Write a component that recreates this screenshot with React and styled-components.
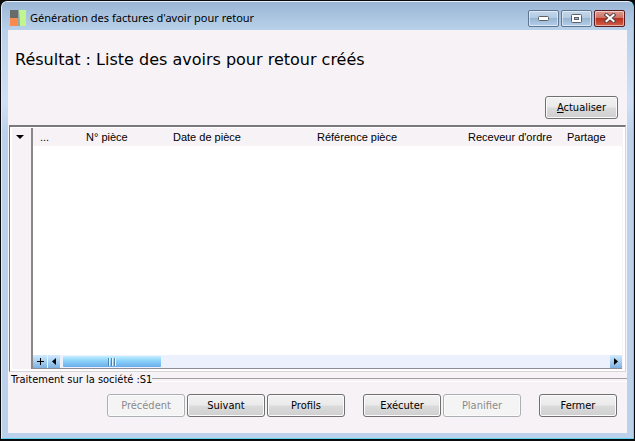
import React from 'react';
import styled, { createGlobalStyle } from 'styled-components';

const GlobalStyle = createGlobalStyle`
  * {
    box-sizing: border-box;
  }

  body {
    margin: 0;
    background: #000;
    color: #000;
    font-family: 'DejaVu Sans Condensed', 'DejaVu Sans', sans-serif;
    font-size: 11px;
  }
`;

const Desktop = styled.div`
  display: flex;
  min-height: 100vh;
  padding: 1px 1px 2px;
  background: #0a0a0c;
`;

const Window = styled.div`
  flex: 1;
  display: flex;
  flex-direction: column;
  padding: 0 6px 5px;
  border: 1px solid #5fd3f0;
  border-top-color: #e6f0fa;
  border-left-color: #e3edf8;
  border-radius: 6px 6px 0 0;
  background: linear-gradient(#9ab6d5 0, #b9d1ea 28px, #cfe0f5 100px, #bcd2ec 130px, #bcd2ec 100%);
`;

const TitleBar = styled.header`
  display: flex;
  align-items: center;
  gap: 4px;
  height: 28px;
  padding: 4px 2px 0;
`;

const Title = styled.h1`
  flex: 1;
  margin: 0;
  font-family: 'Noto Sans', sans-serif;
  font-size: 11px;
  font-weight: 400;
  line-height: 16px;
`;

const WindowControls = styled.div`
  display: flex;
  gap: 2px;
`;

const ControlButton = styled.button`
  display: flex;
  align-items: center;
  justify-content: center;
  width: 31px;
  height: 17px;
  padding: 0;
  border: 1px solid ${(props) => (props.$close ? '#5c1d22' : '#5f7690')};
  border-radius: 2px;
  box-shadow: inset 0 0 0 1px rgba(255, 255, 255, 0.5);
  background: ${(props) =>
    props.$close
      ? 'linear-gradient(#dd9c90 0, #cd7264 45%, #b8301e 50%, #d0604a 100%)'
      : 'linear-gradient(#c5d8ec 0, #b3cae3 45%, #98b5d3 50%, #b5cfe9 100%)'};
`;

const Content = styled.main`
  flex: 1;
  display: flex;
  flex-direction: column;
  background: #f6f2f6;
`;

const Heading = styled.h2`
  margin: 0;
  padding: 18px 7px 0;
  font-family: 'DejaVu Sans', Verdana, sans-serif;
  font-size: 16px;
  font-weight: 400;
  line-height: 24px;
`;

const Toolbar = styled.div`
  display: flex;
  justify-content: flex-end;
  padding: 24px 9px 6px;
`;

const Button = styled.button`
  width: ${(props) => (props.$narrow ? '73px' : '78px')};
  height: 23px;
  padding: 0;
  border: 1px solid #707070;
  border-radius: 3px;
  box-shadow: inset 0 0 0 1px #fbfbfb;
  background: linear-gradient(#f3f2f3 0, #ebeaeb 48%, #dcdbdc 52%, #d0cfd0 100%);
  color: #000;
  font: inherit;
  line-height: 16px;

  &:disabled {
    border-color: #adb0b2;
    background: #f5f4f5;
    color: #8b8a8c;
  }
`;

const ListPanel = styled.section`
  flex: 1;
  display: flex;
  margin: 0 1px;
  padding: 1px 2px 2px 1px;
  border: 1px solid #d8d5d8;
  border-top: 2px solid #7b797c;
  border-left: 1px solid #77757a;
  background: #fff;
`;

const Gutter = styled.div`
  width: 22px;
  padding-top: 7px;
  border-right: 2px solid #8a878b;
  border-left: 1px solid #fff;
  background: #f6f2f6;
`;

const MenuButton = styled.button`
  display: block;
  padding: 0 0 0 4px;
  border: 0;
  background: none;
  line-height: 0;
`;

const ListArea = styled.div`
  flex: 1;
  display: flex;
  flex-direction: column;
  justify-content: space-between;
  min-width: 0;
  border-right: 1px solid #f6f2f6;
`;

const Table = styled.table`
  width: 100%;
  border-collapse: collapse;
  table-layout: fixed;
  font-family: 'Liberation Sans', Arial, sans-serif;
  font-size: 11px;
`;

const ColumnHeader = styled.th`
  width: ${(props) => props.$width || 'auto'};
  height: 18px;
  padding: 0 0 0 7px;
  background: #f6f2f6;
  font-weight: 400;
  text-align: left;
  white-space: nowrap;
`;

const ScrollBar = styled.div`
  display: flex;
  gap: 1px;
  height: 14px;
  border-bottom: 1px solid #8f8e98;
  background: #edf1fd;
`;

const ScrollButton = styled.button`
  display: flex;
  align-items: center;
  justify-content: center;
  width: ${(props) => (props.$wide ? '14px' : '12px')};
  height: 13px;
  padding: 0;
  border: 0;
  background: linear-gradient(#d3ebfc 0, #a5cff3 50%, #7fb2e0 100%);
`;

const Track = styled.div`
  flex: 1;
  padding: 1px 0 0 2px;
`;

const Thumb = styled.div`
  display: flex;
  align-items: center;
  justify-content: center;
  width: 98px;
  height: 11px;
  border-radius: 1px;
  background: linear-gradient(#c4f0ff 0, #8fd4fb 40%, #6aaeea 100%);
`;

const Status = styled.div`
  display: flex;
  align-items: center;
  height: 16px;
  padding-left: 3px;
  line-height: 16px;

  &::after {
    content: '';
    flex: 1;
    height: 2px;
    border-top: 1px solid #a3a0a4;
    border-bottom: 1px solid #fff;
  }
`;

const Footer = styled.footer`
  display: flex;
  justify-content: flex-end;
  gap: 18px;
  padding: 6px 10px 16px;
`;

const ButtonGroup = styled.div`
  display: flex;
  gap: 2px;
`;

const columns = [
  { label: '...', width: '46px' },
  { label: 'N° pièce', width: '87px' },
  { label: 'Date de pièce', width: '144px' },
  { label: 'Référence pièce', width: '151px' },
  { label: "Receveur d'ordre", width: '99px' },
  { label: 'Partage' },
];

const AppIcon = () => (
  <svg width="16" height="16" viewBox="0 0 16 16" aria-hidden="true">
    <rect width="8" height="8" fill="#686c69" />
    <rect y="8" width="8" height="8" fill="#fa8a50" />
    <path d="M9 0h7v16h-6z" fill="#c0f590" />
    <path d="M8 0h1l1 16H8z" fill="#8fa8a4" />
  </svg>
);

const App = () => (
  <>
    <GlobalStyle />
    <Desktop>
      <Window>
        <TitleBar>
          <AppIcon />
          <Title>Génération des factures d'avoir pour retour</Title>
          <WindowControls>
            <ControlButton aria-label="Réduire">
              <svg width="11" height="5" viewBox="0 0 11 5">
                <rect x="0.5" y="0.5" width="10" height="4" rx="1" fill="#fff" stroke="#5a5f68" />
              </svg>
            </ControlButton>
            <ControlButton aria-label="Agrandir">
              <svg width="11" height="9" viewBox="0 0 11 9">
                <rect x="0.5" y="0.5" width="10" height="8" rx="1" fill="#fff" stroke="#5a5f68" />
                <rect x="3.5" y="3.5" width="4" height="2" fill="#9bb8d6" stroke="#5a5f68" />
              </svg>
            </ControlButton>
            <ControlButton $close aria-label="Fermer la fenêtre">
              <svg width="12" height="10" viewBox="0 0 12 10">
                <path d="M2.5 2l7 6M9.5 2l-7 6" stroke="#5b4348" strokeWidth="4" strokeLinecap="square" />
                <path d="M2.5 2l7 6M9.5 2l-7 6" stroke="#fff" strokeWidth="2" strokeLinecap="square" />
              </svg>
            </ControlButton>
          </WindowControls>
        </TitleBar>

        <Content>
          <Heading>Résultat : Liste des avoirs pour retour créés</Heading>
          <Toolbar>
            <Button $narrow>
              <u>A</u>ctualiser
            </Button>
          </Toolbar>

          <ListPanel>
            <Gutter>
              <MenuButton aria-label="Menu de la liste">
                <svg width="8" height="4" viewBox="0 0 8 4">
                  <path d="M0 0h8L4 4z" />
                </svg>
              </MenuButton>
            </Gutter>
            <ListArea>
              <Table>
                <thead>
                  <tr>
                    {columns.map((column) => (
                      <ColumnHeader key={column.label} $width={column.width}>
                        {column.label}
                      </ColumnHeader>
                    ))}
                  </tr>
                </thead>
              </Table>
              <ScrollBar>
                <ScrollButton $wide aria-label="Ajouter">
                  <svg width="7" height="7" viewBox="0 0 7 7">
                    <path d="M3 0h1v3h3v1H4v3H3V4H0V3h3z" />
                  </svg>
                </ScrollButton>
                <ScrollButton aria-label="Défiler à gauche">
                  <svg width="4" height="7" viewBox="0 0 4 7">
                    <path d="M4 0v7L0 3.5z" />
                  </svg>
                </ScrollButton>
                <Track>
                  <Thumb>
                    <svg width="8" height="8" viewBox="0 0 8 8">
                      <path d="M0 0h1v8H0zM3 0h1v8H3zM6 0h1v8H6z" fill="#5580ac" />
                      <path d="M1 0h1v8H1zM4 0h1v8H4zM7 0h1v8H7z" fill="#e4f6ff" />
                    </svg>
                  </Thumb>
                </Track>
                <ScrollButton aria-label="Défiler à droite">
                  <svg width="4" height="7" viewBox="0 0 4 7">
                    <path d="M0 0v7l4-3.5z" />
                  </svg>
                </ScrollButton>
              </ScrollBar>
            </ListArea>
          </ListPanel>

          <Status>Traitement sur la société :S1</Status>
          <Footer>
            <ButtonGroup>
              <Button disabled>Précédent</Button>
              <Button>Suivant</Button>
              <Button>Profils</Button>
            </ButtonGroup>
            <ButtonGroup>
              <Button>Exécuter</Button>
              <Button disabled>Planifier</Button>
            </ButtonGroup>
            <Button>Fermer</Button>
          </Footer>
        </Content>
      </Window>
    </Desktop>
  </>
);

export default App;
